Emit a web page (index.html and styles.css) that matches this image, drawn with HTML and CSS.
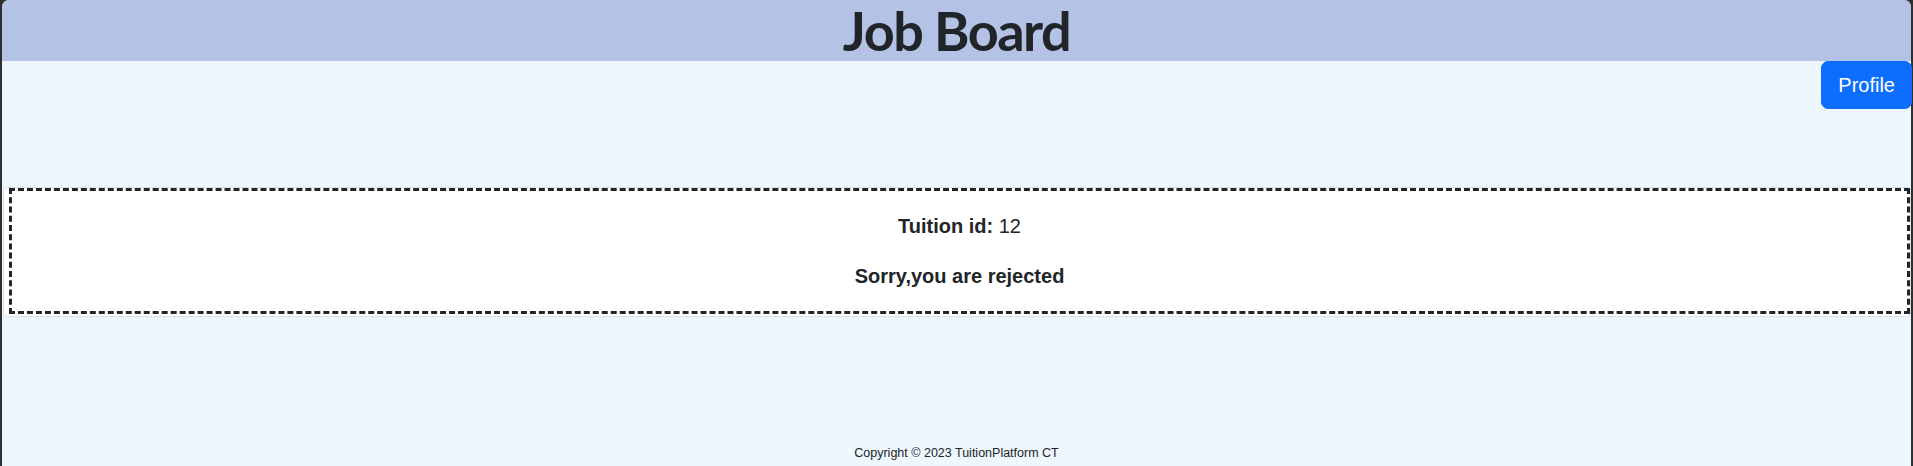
FILE: index.html
```html
<!DOCTYPE html>
<html lang="en">
<head>
<meta charset="utf-8">
<title>Job Board</title>
<link rel="stylesheet" href="styles.css">
</head>
<body>
<div class="frame">
  <header class="topbar">
    <h1 class="title">Job Board</h1>
  </header>
  <div class="actions">
    <button class="btn-profile" type="button">Profile</button>
  </div>
  <main class="content">
    <div class="card">
      <div class="notice">
        <p class="line"><strong>Tuition id:</strong> 12</p>
        <p class="line"><strong>Sorry,you are rejected</strong></p>
      </div>
    </div>
  </main>
  <footer class="footer">Copyright © 2023 TuitionPlatform CT</footer>
</div>
</body>
</html>
```

FILE: styles.css
```css
* { box-sizing: border-box; }
html {
  background: #2f2f2f;
  height: 100%;
}
body {
  margin: 0;
  padding: 0 2px;
  height: 100%;
  font-family: "Liberation Sans", Arial, sans-serif;
  color: #212529;
}
.frame {
  height: 100%;
  background: #eef6fe;
  border-radius: 7px 7px 0 0;
  display: flex;
  flex-direction: column;
}
.topbar {
  height: 61px;
  background: #b4c3e5;
  border-radius: 7px 7px 0 0;
  display: flex;
  align-items: center;
  justify-content: center;
}
.title {
  margin: 0;
  font-family: Lato, "Open Sans", sans-serif;
  font-weight: 700;
  font-size: 54px;
  line-height: 61px;
  letter-spacing: -1.5px;
  color: #212529;
}
.actions {
  display: flex;
  justify-content: flex-end;
}
.btn-profile {
  font-family: "Liberation Sans", Arial, sans-serif;
  font-size: 20px;
  line-height: 30px;
  padding: 8px 16px;
  border: 1px solid #0d6efd;
  border-radius: 7px;
  background: #0d6efd;
  color: #fff;
  margin-right: -1px;
}
.content {
  padding: 78px 0 0 1px;
}
.card {
  background: #fff;
  border: 1px solid #dcdfe3;
  border-radius: 4px;
  padding: 0 0 2px 5px;
}
.notice {
  border: 3px dashed #212529;
  text-align: center;
  padding: 0;
  display: flow-root;
}
.line {
  margin: 20px 0;
  font-size: 20px;
  line-height: 30px;
}
.footer {
  margin-top: auto;
  text-align: center;
  font-size: 12.5px;
  line-height: 14px;
  padding-bottom: 6px;
}
```
